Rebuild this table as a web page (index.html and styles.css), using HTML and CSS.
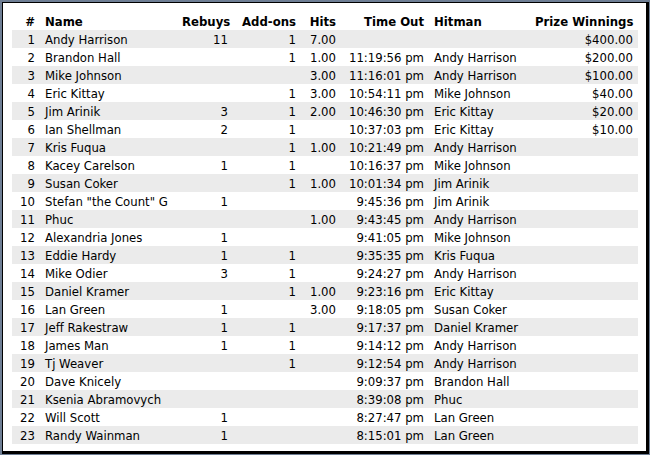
FILE: index.html
```html
<!DOCTYPE html>
<html>
<head>
<meta charset="utf-8">
<link rel="stylesheet" href="styles.css">
</head>
<body>
<div class="frame">
<table class="results">
<colgroup>
<col class="c-num"><col class="c-name"><col class="c-rebuys"><col class="c-addons"><col class="c-hits"><col class="c-time"><col class="c-hitman"><col class="c-prize">
</colgroup>
<thead>
<tr><th class="r">#</th><th class="l">Name</th><th class="r">Rebuys</th><th class="r">Add-ons</th><th class="r">Hits</th><th class="r">Time Out</th><th class="l">Hitman</th><th class="r">Prize Winnings</th></tr>
</thead>
<tbody>
<tr><td class="r">1</td><td>Andy Harrison</td><td class="r">11</td><td class="r">1</td><td class="r">7.00</td><td class="r"></td><td></td><td class="r">$400.00</td></tr>
<tr><td class="r">2</td><td>Brandon Hall</td><td class="r"></td><td class="r">1</td><td class="r">1.00</td><td class="r">11:19:56 pm</td><td>Andy Harrison</td><td class="r">$200.00</td></tr>
<tr><td class="r">3</td><td>Mike Johnson</td><td class="r"></td><td class="r"></td><td class="r">3.00</td><td class="r">11:16:01 pm</td><td>Andy Harrison</td><td class="r">$100.00</td></tr>
<tr><td class="r">4</td><td>Eric Kittay</td><td class="r"></td><td class="r">1</td><td class="r">3.00</td><td class="r">10:54:11 pm</td><td>Mike Johnson</td><td class="r">$40.00</td></tr>
<tr><td class="r">5</td><td>Jim Arinik</td><td class="r">3</td><td class="r">1</td><td class="r">2.00</td><td class="r">10:46:30 pm</td><td>Eric Kittay</td><td class="r">$20.00</td></tr>
<tr><td class="r">6</td><td>Ian Shellman</td><td class="r">2</td><td class="r">1</td><td class="r"></td><td class="r">10:37:03 pm</td><td>Eric Kittay</td><td class="r">$10.00</td></tr>
<tr><td class="r">7</td><td>Kris Fuqua</td><td class="r"></td><td class="r">1</td><td class="r">1.00</td><td class="r">10:21:49 pm</td><td>Andy Harrison</td><td class="r"></td></tr>
<tr><td class="r">8</td><td>Kacey Carelson</td><td class="r">1</td><td class="r">1</td><td class="r"></td><td class="r">10:16:37 pm</td><td>Mike Johnson</td><td class="r"></td></tr>
<tr><td class="r">9</td><td>Susan Coker</td><td class="r"></td><td class="r">1</td><td class="r">1.00</td><td class="r">10:01:34 pm</td><td>Jim Arinik</td><td class="r"></td></tr>
<tr><td class="r">10</td><td>Stefan "the Count" G</td><td class="r">1</td><td class="r"></td><td class="r"></td><td class="r">9:45:36 pm</td><td>Jim Arinik</td><td class="r"></td></tr>
<tr><td class="r">11</td><td>Phuc</td><td class="r"></td><td class="r"></td><td class="r">1.00</td><td class="r">9:43:45 pm</td><td>Andy Harrison</td><td class="r"></td></tr>
<tr><td class="r">12</td><td>Alexandria Jones</td><td class="r">1</td><td class="r"></td><td class="r"></td><td class="r">9:41:05 pm</td><td>Mike Johnson</td><td class="r"></td></tr>
<tr><td class="r">13</td><td>Eddie Hardy</td><td class="r">1</td><td class="r">1</td><td class="r"></td><td class="r">9:35:35 pm</td><td>Kris Fuqua</td><td class="r"></td></tr>
<tr><td class="r">14</td><td>Mike Odier</td><td class="r">3</td><td class="r">1</td><td class="r"></td><td class="r">9:24:27 pm</td><td>Andy Harrison</td><td class="r"></td></tr>
<tr><td class="r">15</td><td>Daniel Kramer</td><td class="r"></td><td class="r">1</td><td class="r">1.00</td><td class="r">9:23:16 pm</td><td>Eric Kittay</td><td class="r"></td></tr>
<tr><td class="r">16</td><td>Lan Green</td><td class="r">1</td><td class="r"></td><td class="r">3.00</td><td class="r">9:18:05 pm</td><td>Susan Coker</td><td class="r"></td></tr>
<tr><td class="r">17</td><td>Jeff Rakestraw</td><td class="r">1</td><td class="r">1</td><td class="r"></td><td class="r">9:17:37 pm</td><td>Daniel Kramer</td><td class="r"></td></tr>
<tr><td class="r">18</td><td>James Man</td><td class="r">1</td><td class="r">1</td><td class="r"></td><td class="r">9:14:12 pm</td><td>Andy Harrison</td><td class="r"></td></tr>
<tr><td class="r">19</td><td>Tj Weaver</td><td class="r"></td><td class="r">1</td><td class="r"></td><td class="r">9:12:54 pm</td><td>Andy Harrison</td><td class="r"></td></tr>
<tr><td class="r">20</td><td>Dave Knicely</td><td class="r"></td><td class="r"></td><td class="r"></td><td class="r">9:09:37 pm</td><td>Brandon Hall</td><td class="r"></td></tr>
<tr><td class="r">21</td><td>Ksenia Abramovych</td><td class="r"></td><td class="r"></td><td class="r"></td><td class="r">8:39:08 pm</td><td>Phuc</td><td class="r"></td></tr>
<tr><td class="r">22</td><td>Will Scott</td><td class="r">1</td><td class="r"></td><td class="r"></td><td class="r">8:27:47 pm</td><td>Lan Green</td><td class="r"></td></tr>
<tr><td class="r">23</td><td>Randy Wainman</td><td class="r">1</td><td class="r"></td><td class="r"></td><td class="r">8:15:01 pm</td><td>Lan Green</td><td class="r"></td></tr>
</tbody>
</table>
</div>
</body>
</html>
```
FILE: styles.css
```css
html, body {
  margin: 0;
  padding: 0;
}
body {
  background: #6e7e94;
  width: 650px;
  height: 455px;
  overflow: hidden;
}
.frame {
  margin: 2px 1px 1px 2px;
  border: 1px solid #000;
  border-right-width: 3px;
  border-bottom-width: 3px;
  background: #fff;
  padding: 9px 8px 7px 9px;
}
.results {
  border-collapse: collapse;
  table-layout: fixed;
  width: 626px;
  font-family: "DejaVu Sans Condensed", "DejaVu Sans", sans-serif;
  font-size: 13px;
  color: #000;
}
.c-num { width: 28px; }
.c-name { width: 137px; }
.c-rebuys { width: 56px; }
.c-addons { width: 68px; }
.c-hits { width: 40px; }
.c-time { width: 88px; }
.c-hitman { width: 101px; }
.c-prize { width: 108px; }
.results th,
.results td {
  box-sizing: border-box;
  height: 18px;
  line-height: 17px;
  padding: 1px 5px 0;
  white-space: nowrap;
  overflow: hidden;
  text-align: left;
  vertical-align: top;
}
.results th {
  font-weight: bold;
}
.results .r {
  text-align: right;
}
.results tbody tr:nth-child(odd) {
  background: #ebebeb;
}
```
